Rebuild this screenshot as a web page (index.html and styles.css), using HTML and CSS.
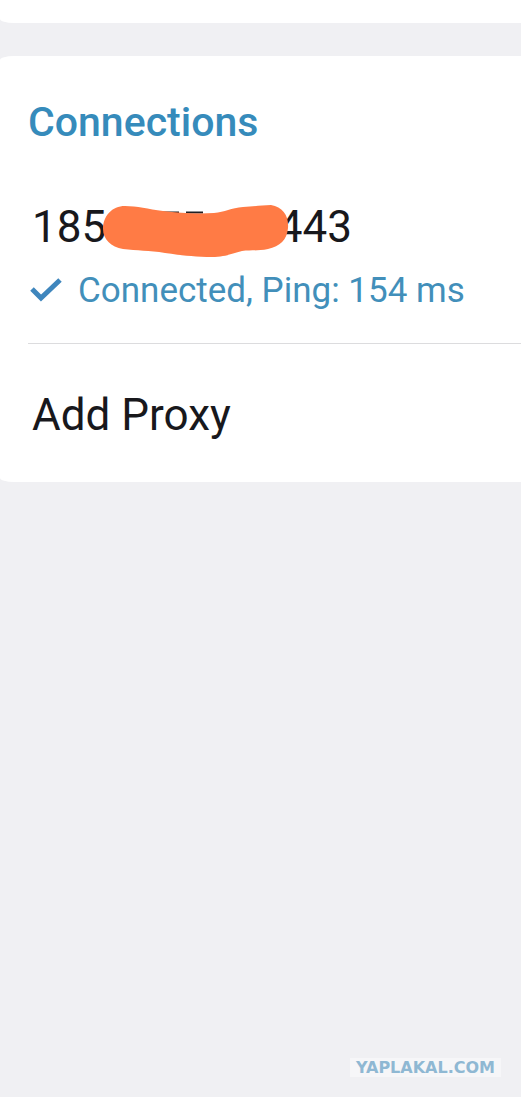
FILE: index.html
```html
<!DOCTYPE html>
<html lang="en">
<head>
  <meta charset="UTF-8" />
  <meta name="viewport" content="width=device-width, initial-scale=1.0"/>
  <title>Proxy Settings</title>
  <link rel="stylesheet" href="styles.css">
</head>
<body>
  <div class="card card-top"></div>

  <main class="card connections">
    <h2>Connections</h2>
    <div class="proxy">
      <div class="address">
        <span>185</span>
        <span>443</span>
        <svg class="scribble" width="190" height="56" viewBox="0 0 190 56" aria-hidden="true">
          <path d="M60 8.500H76M83 8.500H100" stroke="#202024" stroke-width="2"/>
          <path d="M22 2C34 2 45 5 60 7C76 9 94 10 111 9C122 8 128 4 140 3C150 3 158 1 168 1C180 3 186 12 185 24C184 36 177 42 165 45C155 47 148 46 139 47C130 49 123 53 109 53C91 53 77 51 62 49C46 46 34 47 20 45C8 43 0 35 0 25C0 12 9 2 22 2Z" fill="#ff7b45"/>
        </svg>
      </div>
      <div class="status">
        <svg width="32" height="26" viewBox="0 0 32 26" aria-hidden="true">
          <path d="M2 11L11 20L30 2" fill="none" stroke="#3f86bd" stroke-width="5"/>
        </svg>
        <span>Connected, Ping: 154 ms</span>
      </div>
    </div>
    <button class="add" type="button">Add Proxy</button>
  </main>

  <footer>
    <span class="watermark">YAPLAKAL.COM</span>
  </footer>
</body>
</html>
```
FILE: styles.css
```css
* {
  box-sizing: border-box;
}

body {
  font-family: Roboto, Arial, sans-serif;
  background: #f0f0f3;
  color: #18181c;
  display: flex;
  flex-direction: column;
  min-height: 100vh;
  margin: 0;
}

.card {
  background: #fff;
  border-radius: 14px 0 0 14px / 4px 0 0 4px;
}

.card-top {
  height: 23px;
  margin-bottom: 33px;
  border-top-left-radius: 0;
}

.connections {
  padding: 40px 0 0 28px;
}

h2 {
  margin: 0;
  font-size: 41px;
  font-weight: 500;
  line-height: 52px;
  color: #368bbb;
}

.proxy {
  padding: 53px 0 30px;
  border-bottom: 1px solid #dcdcde;
}

.address {
  position: relative;
  display: flex;
  justify-content: space-between;
  width: 324px;
  padding-left: 4px;
  font-size: 44px;
  line-height: 52px;
}

/* hides the middle of the address */
.scribble {
  position: absolute;
  top: 3px;
  left: 75px;
}

.status {
  display: flex;
  align-items: center;
  gap: 16px;
  padding: 16px 0 0 2px;
  font-size: 35px;
  line-height: 44px;
  color: #428fba;
}

.add {
  display: block;
  width: 100%;
  padding: 45px 4px 41px;
  border: 0;
  background: none;
  font-family: inherit;
  font-size: 44px;
  line-height: 52px;
  color: inherit;
  text-align: left;
}

footer {
  display: flex;
  justify-content: flex-end;
  margin-top: auto;
  padding: 0 20px 20px;
}

.watermark {
  padding: 0 6px;
  background: #f6f6f8;
  color: #8fb8d3;
  font-family: "DejaVu Sans", sans-serif;
  font-size: 16px;
  font-weight: bold;
  line-height: 19px;
}
```
